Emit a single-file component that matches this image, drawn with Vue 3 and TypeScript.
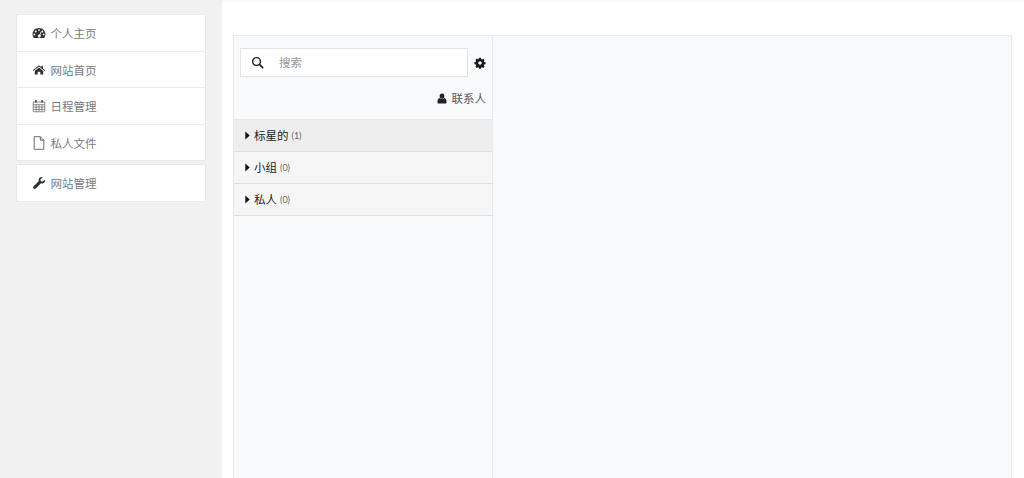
<script setup lang="ts">
interface NavItem { label: string; icon: string }
const navFirst: NavItem[] = [
  { label: '个人主页', icon: 'gauge' },
  { label: '网站首页', icon: 'home' },
  { label: '日程管理', icon: 'calendar' },
  { label: '私人文件', icon: 'file' },
]
const navSecond: NavItem[] = [{ label: '网站管理', icon: 'wrench' }]
const groups = [
  { label: '标星的', count: 1, active: true },
  { label: '小组', count: 0, active: false },
  { label: '私人', count: 0, active: false },
]
</script>

<template>
  <div class="page">
    <aside class="sidebar">
      <ul v-for="(list, i) in [navFirst, navSecond]" :key="i" class="menu">
        <li v-for="item in list" :key="item.label" class="menu-item">
          <svg v-if="item.icon === 'gauge'" class="nav-icon" viewBox="0 0 16 16">
            <path fill="#2b3035" fill-rule="evenodd" d="M8 2.200C3.800 2.200.6 5.400.6 9.400c0 1.400.4 2.700 1.100 3.800.2.3.5.5.9.5h10.800c.4 0 .7-.2.9-.5.7-1.100 1.100-2.400 1.100-3.800 0-4-3.200-7.200-7.400-7.200ZM8 3.600a1.100 1.100 0 1 1 0 2.200 1.100 1.100 0 0 1 0-2.200ZM4.200 5.200a1.100 1.100 0 1 1 0 2.200 1.100 1.100 0 0 1 0-2.200ZM11.800 5.200a1.100 1.100 0 1 1 0 2.200 1.100 1.100 0 0 1 0-2.200ZM2.700 8.600a1.100 1.100 0 1 1 0 2.200 1.100 1.100 0 0 1 0-2.200ZM13.300 8.600a1.100 1.100 0 1 1 0 2.200 1.100 1.100 0 0 1 0-2.200ZM10.300 6.300l.8.4-1.600 3.400a1.700 1.700 0 1 1-.9-.4l1.700-3.400Z" />
          </svg>
          <svg v-else-if="item.icon === 'home'" class="nav-icon" viewBox="0 0 16 16">
            <path fill="#2b3035" d="M8 2.600 1 8.400l.6.8L8 4l6.400 5.200.6-.8-2.500-2.100V3h-1.700v1.900L8 2.600Z" />
            <path fill="#2b3035" d="M8 5 3.200 9v4h3.300v-3h3v3h3.300V9L8 5Z" />
          </svg>
          <svg v-else-if="item.icon === 'calendar'" class="nav-icon" viewBox="0 0 16 16">
            <path fill="none" stroke="#5a5f64" stroke-width=".8" d="M1.400 3.400h13.200v11.200H1.400ZM1.400 6.500h13.200M1.400 9.200h13.200M1.400 11.900h13.200M4.700 6.500v8M8 6.500v8M11.300 6.500v8" />
            <path fill="none" stroke="#2b3035" stroke-width="1.500" d="M4.500 1.200v3.200M11.500 1.200v3.200" />
          </svg>
          <svg v-else-if="item.icon === 'file'" class="nav-icon" viewBox="0 0 16 16">
            <path fill="none" stroke="#53585d" stroke-width="1" d="M2.500 .8h7l4 4v10.400h-11ZM9.500 .8v4h4" />
          </svg>
          <svg v-else class="nav-icon" viewBox="0 0 16 16">
            <path fill="#2b3035" d="M15 4.200c.2 1.500-.3 2.800-1.400 3.600-1 .7-2.200.8-3.300.4L4.200 14.400c-.7.7-1.800.7-2.500 0s-.7-1.800 0-2.500l6.100-6.200c-.4-1.200-.2-2.500.6-3.400.9-1 2.200-1.400 3.600-1.100L9.600 4l.4 2 2 .4L15 4.200Z" />
          </svg>
          <span>{{ item.label }}</span>
        </li>
      </ul>
    </aside>

    <main class="main">
      <div class="panel">
        <section class="contacts">
          <div class="search-row">
            <label class="search">
              <svg class="search-icon" viewBox="0 0 16 16">
                <circle cx="6.800" cy="6.800" r="4.800" fill="none" stroke="#1f2327" stroke-width="1.800" />
                <path d="m10.400 10.400 4 4" stroke="#1f2327" stroke-width="2.100" stroke-linecap="round" />
              </svg>
              <span class="placeholder">搜索</span>
            </label>
            <svg class="gear" viewBox="0 0 16 16">
              <path fill="#16191c" fill-rule="evenodd" d="M6.700 1h2.600l.4 1.900 1 .4 1.600-1 1.800 1.800-1 1.600.4 1 1.900.4v2.600l-1.900.4-.4 1 1 1.600-1.800 1.800-1.600-1-1 .4-.4 1.900H6.700l-.4-1.900-1-.4-1.600 1-1.800-1.800 1-1.600-.4-1-1.900-.4V6.700l1.900-.4.4-1-1-1.600 1.800-1.800 1.600 1 1-.4.4-1.900ZM8 5.600a2.400 2.400 0 1 0 0 4.800 2.400 2.400 0 0 0 0-4.800Z" />
            </svg>
          </div>
          <div class="contact-link">
            <svg class="user" viewBox="0 0 16 16" preserveAspectRatio="none">
              <circle cx="8" cy="4.500" r="3.800" fill="#1f2327" />
              <path fill="#1f2327" d="M4.300 7.400C2 8 .8 9.800.8 12v1.800c0 .9.700 1.500 1.600 1.500h11.200c.9 0 1.600-.6 1.600-1.500V12c0-2.200-1.200-4-3.500-4.600-1 .9-2.300 1.400-3.700 1.400s-2.700-.5-3.700-1.400Z" />
            </svg>
            <span>联系人</span>
          </div>
          <ul class="groups">
            <li v-for="g in groups" :key="g.label" class="group" :class="{ active: g.active }">
              <svg class="caret" viewBox="0 0 6 10" preserveAspectRatio="none"><path fill="#111" d="M.4 .6v8.800l5.200-4.400Z" /></svg>
              <span class="group-name">{{ g.label }}</span>
              <span class="count">({{ g.count }})</span>
            </li>
          </ul>
        </section>
        <section class="detail"></section>
      </div>
    </main>
  </div>
</template>

<style>
html, body { margin: 0; overflow: hidden; }
</style>

<style scoped>
.page {
  display: flex;
  height: 478px;
  overflow: hidden;
  font-family: "Liberation Sans", "Noto Sans CJK SC", sans-serif;
  background: #fff;
}
.sidebar {
  flex: 0 0 222px;
  box-sizing: border-box;
  padding: 14px 16px 0;
  background: #f1f1f1;
}
.menu {
  list-style: none;
  margin: 0 0 3px;
  padding: 0;
  background: #fff;
  border: 1px solid #e9e9e9;
  border-bottom: 0;
  box-sizing: border-box;
  width: 190px;
}
.menu-item {
  display: flex;
  align-items: center;
  height: 36.500px;
  box-sizing: border-box;
  padding-top: .5px;
  padding-left: 15px;
  gap: 4.500px;
  font-size: 11.500px;
  color: #777a7c;
  border-bottom: 1px solid #e9e9e9;
}
.nav-icon { width: 14px; height: 14px; flex: none; }
.main {
  flex: 1;
  min-width: 0;
  border-top: 2px solid #f9f9f9;
  box-sizing: border-box;
  padding: 33px 12px 0 11px;
}
.panel {
  display: flex;
  height: 100%;
  border: 1px solid #e6e9ec;
  border-bottom: 0;
  background: #f8f9fb;
  box-sizing: border-box;
}
.contacts {
  flex: 0 0 259px;
  box-sizing: border-box;
  border-right: 1px solid #e6e9ec;
}
.search-row {
  display: flex;
  align-items: center;
  padding: 12px 6px 0;
  gap: 6px;
}
.search {
  display: flex;
  align-items: center;
  box-sizing: border-box;
  width: 228px;
  height: 29px;
  padding-left: 10px;
  background: #fff;
  border: 1px solid #e0e4e9;
}
.search-icon { width: 13px; height: 13px; flex: none; }
.placeholder {
  margin-left: 15px;
  margin-bottom: 1px;
  font-size: 11.500px;
  color: #94989c;
}
.gear { width: 12px; height: 12px; flex: none; }
.contact-link {
  display: flex;
  align-items: center;
  justify-content: flex-end;
  gap: 5px;
  height: 22px;
  margin-top: 10px;
  padding-right: 6px;
  font-size: 11.500px;
  color: #55595d;
}
.user { width: 10px; height: 11px; flex: none; }
.groups {
  list-style: none;
  margin: 10px 0 0;
  padding: 0;
  border-top: 1px solid #e8e8e8;
}
.group {
  display: flex;
  align-items: center;
  box-sizing: border-box;
  height: 32px;
  padding-left: 11px;
  background: #f6f6f6;
  border-bottom: 1px solid #e0e0e0;
  color: #222;
}
.group.active { background: #eeeeee; }
.caret { width: 5px; height: 9px; flex: none; margin-right: 4px; }
.group-name { font-size: 11.500px; margin-bottom: 1px; }
.count { margin-left: 3px; font-size: 9px; color: #666; font-family: "Lato", sans-serif; }
.detail { flex: 1; }
</style>
